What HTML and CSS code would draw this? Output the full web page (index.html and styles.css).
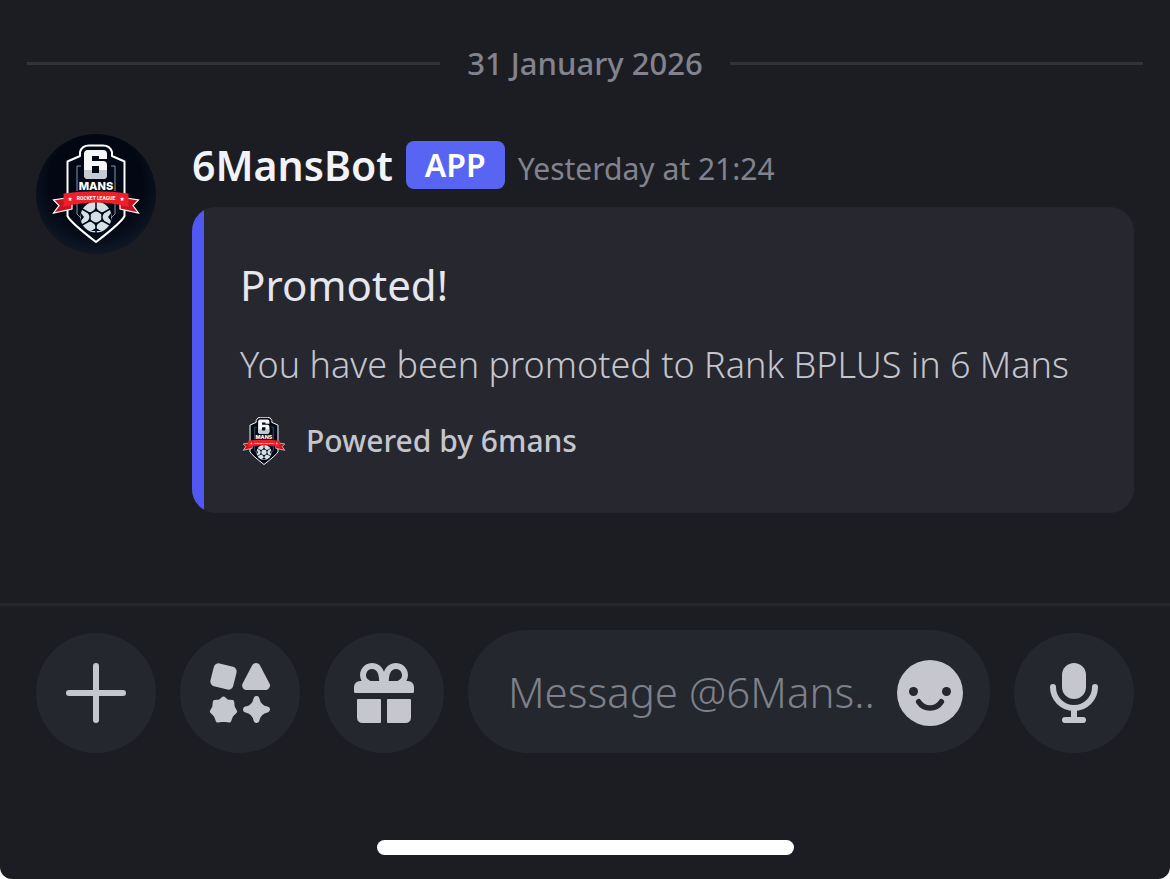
FILE: index.html
```html
<!DOCTYPE html>
<html lang="en">
<head>
  <meta charset="UTF-8">
  <meta name="viewport" content="width=device-width, initial-scale=1.0">
  <title>6MansBot</title>
  <link rel="stylesheet" href="styles.css">
</head>
<body>
  <!-- Crest shared by the avatar and the embed footer -->
  <svg class="sprite" aria-hidden="true">
    <symbol id="crest" viewBox="0 0 120 120">
      <path d="M44 22V18Q46 11.500 53 11.500H67Q74 11.500 76 18V22L88.500 27.500V82Q86 88 60 108Q34 88 31.500 82V27.500Z" fill="#020916" stroke="#fff" stroke-width="2" stroke-linejoin="round"/>
      <path d="M45 32H41V57M75 32H79V57M41 70V80L45 84M79 70V80L75 84" fill="none" stroke="#8995a3" stroke-width="1"/>
      <path d="M52 16H67Q71 16 71 20V25H63V22H56V27H67Q71 27 71 31V41Q71 45 67 45H52Q48 45 48 41V20Q48 16 52 16ZM56 32V39H63V32Z" fill="#f4f6f8" fill-rule="evenodd"/>
      <path d="M48 36H56V39H63V36H71V41Q71 45 67 45H52Q48 45 48 41Z" fill="#c3ccd4"/>
      <text x="60" y="56" text-anchor="middle" class="crest-mans">MANS</text>
      <circle cx="60" cy="83" r="15.500" fill="#d5dfe6"/>
      <path d="M60 76L66 79.500V86.500L60 90L54 86.500V79.500ZM60 76V67M66 79.500L74 75M66 86.500L74 91M60 90V99M54 86.500L46 91M54 79.500L46 75" fill="none" stroke="#020916" stroke-width="1.500"/>
      <path d="M60 73.500L63 77.500H57ZM68.500 78.500L66.500 82L64 78.500ZM51.500 78.500L53.500 82L56 78.500ZM68.500 87.500L66.500 84L64 87.500ZM51.500 87.500L53.500 84L56 87.500ZM60 92.500L63 88.500H57ZM55 97H65L60 94ZM45 79L48 83L45 87ZM75 79L72 83L75 87Z" fill="#020916"/>
      <path d="M30 64L17.500 66L23 71.500L17.500 79L36 75V68ZM90 64L102.500 66L97 71.500L102.500 79L84 75V68Z" fill="#c9141f" stroke="#fff" stroke-width="1.200"/>
      <path d="M27.500 59.500Q60 55 92.500 59.500V73Q60 64 27.500 73Z" fill="#ed1f2b"/>
      <text x="60" y="65.500" text-anchor="middle" class="crest-league">ROCKET LEAGUE</text>
      <path d="M34 63l.7 1.300 1.400.2-1 1 .3 1.500-1.400-.7-1.300.7.300-1.500-1-1 1.400-.2zM86 63l.7 1.300 1.400.2-1 1 .3 1.500-1.400-.7-1.300.7.300-1.500-1-1 1.400-.2z" fill="#fff"/>
    </symbol>
  </svg>

  <div class="app">
    <main class="chat">
      <div class="date-divider"><span>31 January 2026</span></div>

      <article class="message">
        <div class="avatar">
          <svg width="120" height="120" role="img" aria-label="6 Mans"><use href="#crest"/></svg>
        </div>
        <div class="message-body">
          <header class="message-header">
            <span class="author">6MansBot</span>
            <span class="badge">APP</span>
            <time class="timestamp">Yesterday at 21:24</time>
          </header>
          <div class="embed">
            <div class="embed-accent"></div>
            <div class="embed-content">
              <h2 class="embed-title">Promoted!</h2>
              <p class="embed-text">You have been promoted to Rank BPLUS in 6 Mans</p>
              <footer class="embed-footer">
                <svg class="embed-icon" viewBox="11 11 98 98" aria-hidden="true"><use href="#crest" width="120" height="120"/></svg>
                <span>Powered by 6mans</span>
              </footer>
            </div>
          </div>
        </div>
      </article>
    </main>

    <form class="composer">
      <button type="button" class="round-button" aria-label="Add attachment">
        <svg class="icon" viewBox="0 0 24 24"><path d="M12 3v18M3 12h18" fill="none" stroke="currentColor" stroke-width="2" stroke-linecap="round"/></svg>
      </button>
      <button type="button" class="round-button" aria-label="Apps">
        <svg class="icon" viewBox="0 0 24 24" fill="currentColor" stroke="currentColor" stroke-linejoin="round">
          <rect x="2.600" y="2.600" width="7.800" height="7.800" rx="1.600" transform="rotate(14 6.500 6.500)" stroke="none"/>
          <path d="M17.350 3.500L20.500 9.500H14.200Z" stroke-width="3"/>
          <path d="M6.500 13.700L7.700 14.700L9.500 14.900L9.700 16.700L10.500 18.200L9.200 19.500L8.500 21.300L6.500 21L4.500 21.300L3.800 19.500L2.500 18.200L3.300 16.700L3.500 14.900L5.300 14.700Z" stroke-width="1.100"/>
          <path d="M17.500 14C17.900 16 19 17.100 21 17.500C19 17.900 17.900 19 17.500 21C17.100 19 16 17.900 14 17.500C16 17.100 17.100 16 17.500 14Z" stroke-width="2"/>
        </svg>
      </button>
      <button type="button" class="round-button" aria-label="Send a gift">
        <svg class="icon" viewBox="0 0 24 24" fill="currentColor">
          <path fill-rule="evenodd" d="M4.540 8A4 4 0 0 1 8 2C10 2 11.400 3.300 12 4.900C12.600 3.300 14 2 16 2A4 4 0 0 1 19.460 8H20A2 2 0 0 1 22 10V11.500A.5.5 0 0 1 21.500 12H2.500A.5.5 0 0 1 2 11.500V10A2 2 0 0 1 4 8ZM8 4A2 2 0 0 0 6.700 7.500L7.500 8H10.400C10.300 5.800 9.800 4 8 4ZM16 4A2 2 0 0 1 17.300 7.500L16.500 8H13.600C13.700 5.800 14.200 4 16 4Z"/>
          <path d="M3.300 14H10.700Q11 14 11 14.300V21.700Q11 22 10.700 22H5Q3 22 3 20V14.300Q3 14 3.300 14ZM13.300 14H20.700Q21 14 21 14.300V20Q21 22 19 22H13.300Q13 22 13 21.700V14.300Q13 14 13.300 14Z"/>
        </svg>
      </button>
      <div class="message-field">
        <input type="text" class="message-input" aria-label="Message" placeholder="Message @6Mans..">
        <button type="button" class="emoji-button" aria-label="Emoji">
          <svg class="icon" viewBox="0 0 24 24">
            <circle cx="12" cy="12" r="11" fill="currentColor"/>
            <circle class="face" cx="6.500" cy="11.500" r="1.500"/>
            <circle class="face" cx="17.500" cy="11.500" r="1.500"/>
            <path class="smile" d="M8.200 14.900C10 17.700 14 17.700 15.800 14.900"/>
          </svg>
        </button>
      </div>
      <button type="button" class="round-button" aria-label="Record voice message">
        <svg class="icon" viewBox="0 0 24 24">
          <rect x="8" y="2" width="8" height="12" rx="4" fill="currentColor"/>
          <path d="M5 10a7 7 0 0 0 14 0M12 17v4M9 21h6" fill="none" stroke="currentColor" stroke-width="2" stroke-linecap="round"/>
        </svg>
      </button>
    </form>

    <div class="home-indicator"></div>
  </div>
</body>
</html>
```
FILE: styles.css
```css
* {
  box-sizing: border-box;
}

body {
  margin: 0;
  background-color: #fff;
  font-family: "Noto Sans", "Open Sans", sans-serif;
}

h2, p {
  margin: 0;
}

button {
  padding: 0;
  border: none;
  cursor: pointer;
}

svg {
  display: block;
}

.sprite {
  display: none;
}

.app {
  display: flex;
  flex-direction: column;
  min-height: 100vh;
  background-color: #1c1d22;
  border-radius: 0 0 12px 12px;
}

/* Chat */
.chat {
  padding-top: 39px;
}

.date-divider {
  display: flex;
  align-items: center;
  gap: 27px;
  padding: 0 27px;
  color: #82838e;
  font-size: 31px;
  font-weight: 500;
  line-height: 48px;
}

.date-divider::before,
.date-divider::after {
  content: "";
  flex: 1;
  height: 3px;
  background-color: #323339;
}

.message {
  display: flex;
  gap: 36px;
  padding: 47px 36px 90px;
}

.avatar {
  flex: none;
  width: 120px;
  height: 120px;
  border-radius: 50%;
  overflow: hidden;
  background: radial-gradient(circle at 50% 40%, #020713 50%, #1b2736 100%);
}

.message-body {
  flex: 1;
  min-width: 0;
  padding-top: 7px;
}

.message-header {
  display: flex;
  align-items: center;
  height: 48px;
  margin-bottom: 18px;
  white-space: nowrap;
}

.author {
  color: #f2f3f8;
  font-size: 41px;
  font-weight: 600;
}

.badge {
  margin: 0 13px;
  padding: 0 19px;
  border-radius: 8px;
  background-color: #5865f2;
  color: #fff;
  font-size: 32px;
  font-weight: 600;
  line-height: 48px;
}

.timestamp {
  padding-top: 6px;
  color: #82838e;
  font-size: 30px;
}

.embed {
  display: flex;
  border-radius: 24px;
  overflow: hidden;
  background-color: #27272f;
}

.embed-accent {
  width: 12px;
  background-color: #5158f2;
}

.embed-content {
  flex: 1;
  padding: 48px 36px;
}

.embed-title {
  margin-bottom: 26px;
  color: #e6e7ec;
  font-size: 42px;
  font-weight: 400;
  line-height: 60px;
}

.embed-text {
  margin-bottom: 28px;
  color: #c4c5cd;
  font-size: 36px;
  font-weight: 300;
  line-height: 48px;
}

.embed-footer {
  display: flex;
  align-items: center;
  gap: 18px;
  color: #c4c5cd;
  font-size: 30px;
  font-weight: 500;
  line-height: 48px;
}

.embed-icon {
  width: 48px;
  height: 48px;
}

/* Lettering on the crest */
.crest-mans {
  fill: #fff;
  font-family: Inter, sans-serif;
  font-size: 11px;
  font-weight: 800;
}

.crest-league {
  fill: #fff;
  font-family: Roboto, sans-serif;
  font-size: 5px;
  font-weight: 700;
}

/* Composer */
.composer {
  display: flex;
  align-items: flex-end;
  gap: 24px;
  padding: 24px 36px;
  border-top: 3px solid #26272d;
}

.round-button {
  display: flex;
  flex: none;
  align-items: center;
  justify-content: center;
  width: 120px;
  height: 120px;
  border-radius: 50%;
  background-color: #24272e;
  color: #c6c7ce;
}

.icon {
  width: 72px;
  height: 72px;
}

.message-field {
  display: flex;
  flex: 1;
  align-items: flex-end;
  min-width: 0;
  height: 123px;
  padding: 0 24px 24px 40px;
  border-radius: 60px;
  background-color: #24272e;
}

.message-input {
  flex: 1;
  min-width: 0;
  height: 75px;
  padding: 0;
  border: none;
  outline: none;
  background: none;
  color: #e6e7ec;
  font-family: inherit;
  font-size: 42px;
  font-weight: 300;
}

.message-input::placeholder {
  color: #7e808a;
  opacity: 1;
}

.emoji-button {
  flex: none;
  background: none;
  color: #c6c7ce;
}

.face {
  fill: #24272e;
}

.smile {
  fill: none;
  stroke: #24272e;
  stroke-width: 1.8;
  stroke-linecap: round;
}

.home-indicator {
  width: 417px;
  max-width: 60%;
  height: 15px;
  margin: 63px auto 24px;
  border-radius: 8px;
  background-color: #fff;
}
```
